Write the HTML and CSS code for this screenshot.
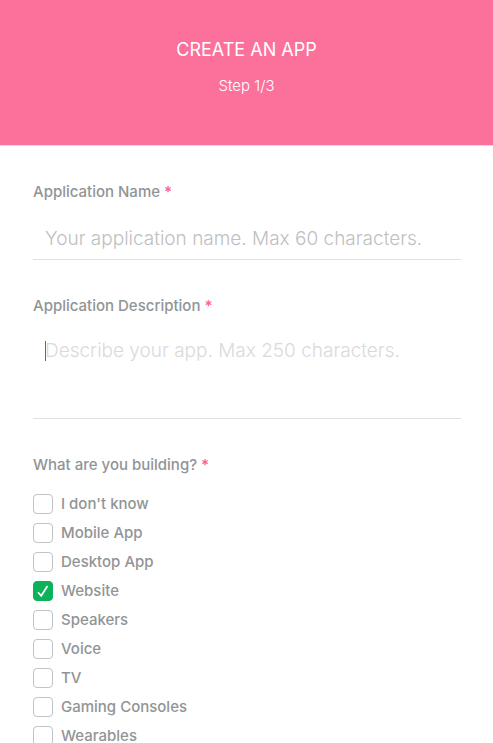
FILE: index.html
```html
<!DOCTYPE html>
<html lang="en">
<head>
<meta charset="utf-8">
<meta name="viewport" content="width=device-width, initial-scale=1">
<title>Create an app</title>
<link rel="stylesheet" href="styles.css">
</head>
<body>
<header class="header">
  <h1 class="title">CREATE AN APP</h1>
  <p class="step">Step 1/3</p>
</header>
<form class="form">
  <div class="field">
    <label class="label" for="name">Application Name <span class="required">*</span></label>
    <input class="control" id="name" type="text" placeholder="Your application name. Max 60 characters.">
  </div>
  <div class="field">
    <label class="label" for="description">Application Description <span class="required">*</span></label>
    <div class="editor">
      <textarea class="control area" id="description" placeholder="Describe your app. Max 250 characters."></textarea>
      <span class="caret"></span>
    </div>
  </div>
  <fieldset class="group">
    <legend class="label">What are you building? <span class="required">*</span></legend>
    <div class="options">
      <label class="option"><input class="box" type="checkbox">I don't know</label>
      <label class="option"><input class="box" type="checkbox">Mobile App</label>
      <label class="option"><input class="box" type="checkbox">Desktop App</label>
      <label class="option"><span class="ticked"><input class="box" type="checkbox" checked><svg class="tick" viewBox="0 0 20 20" aria-hidden="true"><path d="M5 11.3 8.2 14.8 14.5 5"/></svg></span>Website</label>
      <label class="option"><input class="box" type="checkbox">Speakers</label>
      <label class="option"><input class="box" type="checkbox">Voice</label>
      <label class="option"><input class="box" type="checkbox">TV</label>
      <label class="option"><input class="box" type="checkbox">Gaming Consoles</label>
      <label class="option"><input class="box" type="checkbox">Wearables</label>
    </div>
  </fieldset>
</form>
</body>
</html>
```
FILE: styles.css
```css
* {
  box-sizing: border-box;
}

body {
  height: 100vh;
  margin: 0;
  overflow: hidden;
  background: #fff;
  color: #919496;
  font-family: Inter, "Liberation Sans", sans-serif;
  font-size: 15px;
  line-height: 20px;
}

.header {
  padding: 40px 32px 49px;
  border-bottom: 1px solid #e3dde0;
  background: #fc719c;
  color: #fff;
  text-align: center;
}

.title {
  margin: 0 0 16px;
  font-size: 18px;
  font-weight: 400;
}

.step {
  margin: 0;
  font-size: 15px;
  font-weight: 300;
}

.form {
  padding: 36px 32px 0 33px;
}

.field {
  margin-bottom: 36px;
}

.label {
  display: block;
  padding: 0;
  font-weight: 500;
}

.required {
  color: #fc6394;
  font-weight: 600;
}

.control {
  display: block;
  width: 100%;
  height: 48px;
  margin-top: 10px;
  padding: 6px 12px 0;
  border: 0;
  border-bottom: 1px solid #dfe0e2;
  border-radius: 0;
  outline: 0;
  background: transparent;
  color: #919496;
  font: 300 19px/24px Inter, "Liberation Sans", sans-serif;
}

.control::placeholder {
  color: #c0c0c0;
  opacity: 1;
}

.editor {
  position: relative;
}

.area {
  height: 80px;
  margin-top: 23px;
  padding-top: 0;
  resize: none;
}

.area::placeholder {
  color: #dadada;
}

.caret {
  position: absolute;
  top: 2px;
  left: 12px;
  width: 1px;
  height: 20px;
  background: #00a352;
}

.group {
  min-width: 0;
  margin: 0;
  padding: 0;
  border: 0;
}

.options {
  display: flex;
  flex-direction: column;
  gap: 9px;
  padding-top: 19px;
}

.option {
  display: flex;
  align-items: center;
  gap: 8px;
  height: 20px;
  font-weight: 500;
}

.box {
  display: block;
  width: 20px;
  height: 20px;
  margin: 0;
  appearance: none;
  border: 1px solid #c1c3c6;
  border-radius: 4px;
  background: #fff;
}

.box:checked {
  border-color: #0bb25a;
  background: #0bb25a;
}

.ticked {
  position: relative;
}

.tick {
  position: absolute;
  inset: 0;
  width: 20px;
  height: 20px;
  fill: none;
  stroke: #fff;
  stroke-width: 1.7;
  pointer-events: none;
}
```
